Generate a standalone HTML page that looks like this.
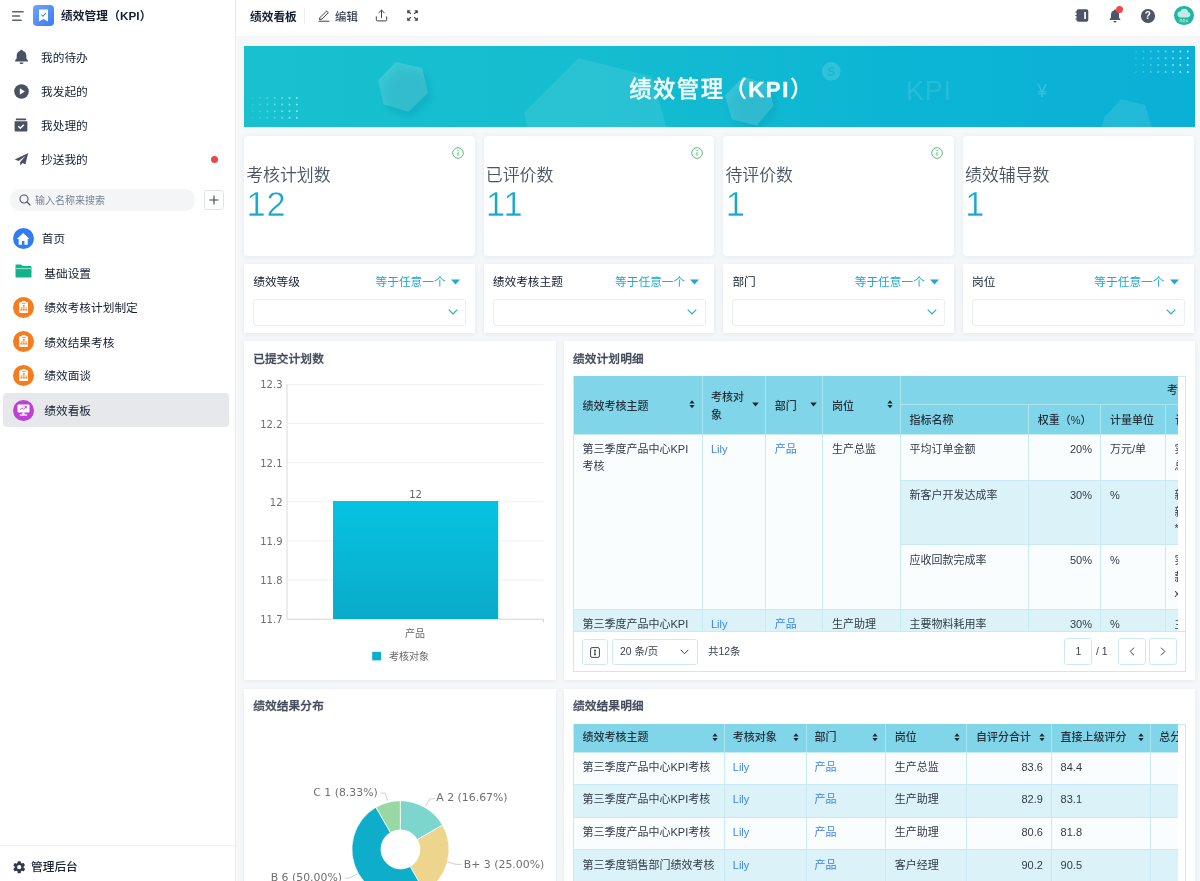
<!DOCTYPE html>
<html lang="zh-CN">
<head>
<meta charset="utf-8">
<title>绩效管理（KPI）</title>
<style>
*{box-sizing:border-box;margin:0;padding:0}
html,body{width:1200px;height:881px;overflow:hidden;background:#f5f7f9}
body{position:relative;will-change:transform;font-family:"Liberation Sans","Noto Sans CJK SC",sans-serif;font-size:12px;color:#141e31;-webkit-font-smoothing:antialiased}
.abs{position:absolute}
/* sidebar */
#side{position:absolute;left:0;top:0;width:236px;height:881px;background:#fff;border-right:1px solid #e9ecf0}
#side .hd{position:absolute;left:0;top:0;width:235px;height:32px}
#side .ttl{position:absolute;left:61px;top:6.900px;font-size:11.700px;font-weight:700;line-height:18px;letter-spacing:.1px;color:#141e31}
.nav{position:absolute;left:0;width:235px;height:34px}
.nav span{position:absolute;left:41px;top:9px;font-size:11.700px;line-height:18px;color:#141e31}
.app{position:absolute;left:3px;width:226px;height:34px;border-radius:4px}
.app span{position:absolute;left:41.300px;top:9px;font-size:11.700px;line-height:18px;color:#141e31}
.app.on{background:#e6e8ec}
.circ{position:absolute;left:10px;top:6.5px;width:21px;height:21px;border-radius:50%}
/* top bar */
#top{position:absolute;left:236px;top:0;width:964px;height:36px;background:#fff;box-shadow:0 0 1px rgba(0,0,0,.05)}
/* cards */
.card{position:absolute;background:#fff;box-shadow:0 1px 4px rgba(200,208,220,.35)}
.stat{border-radius:4px}
.stat .lb{position:absolute;left:2px;top:27.800px;font-size:16.900px;line-height:24px;color:#4b5262;font-weight:350}
.stat .nm{position:absolute;left:2.300px;top:48.300px;font-size:34.400px;line-height:40px;color:#17a7cc;font-family:"Liberation Sans",sans-serif;letter-spacing:.8px;-webkit-text-stroke:.45px #fff;paint-order:fill stroke}
.flt .lb{position:absolute;left:9px;top:9.300px;font-size:11.700px;line-height:18px;color:#141e31}
.flt .op{position:absolute;right:15px;top:9.300px;font-size:11.700px;line-height:18px;color:#1ea9d0}
.flt .sel{position:absolute;left:8.800px;top:34.500px;right:8.700px;height:27.200px;border:1px solid #eaedf1;border-radius:3px;background:#fff}
.ctitle{position:absolute;left:9px;top:8.900px;font-size:11.700px;line-height:18px;font-weight:500;-webkit-text-stroke:.3px #434a5b;letter-spacing:.1px;color:#434a5b}
</style>
</head>
<body>
<div id="side">
  <div class="hd">
    <svg class="abs" style="left:11px;top:9px" width="14" height="14" viewBox="0 0 14 14"><path d="M1.700 2.700h10.400M1.700 7h6.800M1.700 11.300h8.400" stroke="#5a6172" stroke-width="1.500" stroke-linecap="round" fill="none"/></svg>
    <div class="abs" style="left:33px;top:5px;width:21px;height:21px;border-radius:4px;background:linear-gradient(135deg,#6aa6f8,#3c7bf0)"></div>
    <svg class="abs" style="left:38px;top:9px" width="11" height="13" viewBox="0 0 11 13"><path d="M1 .5h9v12l-4.500-2.600L1 12.500z" fill="#fff"/><path d="M3.400 5.600l1.600 1.600 2.800-3" stroke="#4d8af3" stroke-width="1.100" fill="none"/></svg>
    <div class="ttl">绩效管理（KPI）</div>
  </div>

  <!-- nav -->
  <div class="nav" style="top:40px">
    <svg class="abs" style="left:13.800px;top:9px" width="15" height="16" viewBox="0 0 14 16" preserveAspectRatio="none"><path d="M7 .8c.7 0 1.200.5 1.200 1.100 2 .5 3.300 2.300 3.300 4.500v3.200l1.500 2v.8H1v-.8l1.500-2V6.400c0-2.200 1.300-4 3.300-4.500C5.800 1.300 6.300.8 7 .8z" fill="#4a5163"/><path d="M5.200 13.400h3.600c0 1-.8 1.700-1.800 1.700s-1.800-.7-1.800-1.700z" fill="#4a5163"/></svg>
    <span>我的待办</span></div>
  <div class="nav" style="top:74px">
    <svg class="abs" style="left:14px;top:10px" width="15" height="15" viewBox="0 0 15 15"><circle cx="7.500" cy="7.500" r="7.300" fill="#4a5163"/><path d="M5.800 4.200l5 3.300-5 3.300z" fill="#fff"/></svg>
    <span>我发起的</span></div>
  <div class="nav" style="top:108px">
    <svg class="abs" style="left:14px;top:10px" width="14" height="14" viewBox="0 0 14 14"><rect x="1.800" y=".6" width="10.400" height="1.700" rx=".6" fill="#4a5163"/><path d="M.6 3.200h12.800v9.200c0 .6-.5 1.100-1.100 1.100H1.700c-.6 0-1.100-.5-1.100-1.100z" fill="#4a5163"/><path d="M4.300 8.300l2 2 3.500-3.600" stroke="#fff" stroke-width="1.500" fill="none"/></svg>
    <span>我处理的</span></div>
  <div class="nav" style="top:142px">
    <svg class="abs" style="left:14px;top:10px" width="15" height="15" viewBox="0 0 15 15"><path d="M14.200 1L.8 7.600l3.800 1.500L11.400 4 6.200 10v3.800l2.300-2.700 2.900 1.300z" fill="#4a5163"/></svg>
    <span>抄送我的</span>
    <div class="abs" style="left:211px;top:14px;width:7px;height:7px;border-radius:50%;background:#e8484b"></div></div>
  <!-- search -->
  <div class="abs" style="left:10px;top:189px;width:185px;height:22px;border-radius:11px;background:#f3f5f7"></div>
  <svg class="abs" style="left:19px;top:194px" width="12" height="12" viewBox="0 0 12 12"><circle cx="5" cy="5" r="4" stroke="#4a5163" stroke-width="1.100" fill="none"/><path d="M8 8l3 3" stroke="#4a5163" stroke-width="1.100" stroke-linecap="round"/></svg>
  <div class="abs" style="left:35px;top:192px;font-size:10px;line-height:18px;color:#7a8191">输入名称来搜索</div>
  <div class="abs" style="left:204px;top:190px;width:20px;height:20px;border:1px solid #dfe2e7;border-radius:3px;background:#fff"></div>
  <svg class="abs" style="left:209px;top:195px" width="10" height="10" viewBox="0 0 10 10"><path d="M5 .5v9M.5 5h9" stroke="#3a4152" stroke-width="1.100"/></svg>
  <!-- apps -->
  <div class="app" style="top:221.900px">
    <div class="circ" style="background:#2f7df6;left:10px"></div>
    <svg class="abs" style="left:12.900px;top:9.800px" width="14.400" height="14.400" viewBox="0 0 13 13"><path d="M6.500 1L.8 6.300h1.600v5.200h3V8.200h2.200v3.300h3V6.300h1.600z" fill="#fff"/></svg>
    <span style="left:38.800px;top:7.900px">首页</span></div>
  <div class="app" style="top:256px">
    <svg class="abs" style="left:12px;top:7.500px" width="17" height="14" viewBox="0 0 17 14"><path d="M.5 1.500C.5.900.9.500 1.500.500h4.600l1.500 1.400h7.900c.6 0 1 .4 1 1v9.600c0 .6-.4 1-1 1h-14c-.6 0-1-.4-1-1z" fill="#12b38b"/><rect x=".5" y="3.900" width="16" height="1.200" fill="#8fdcc6"/></svg>
    <span>基础设置</span></div>
  <div class="app" style="top:290px">
    <div class="circ" style="background:#f57c1f"></div>
    <svg class="abs" style="left:15.700px;top:10.800px" width="9.600" height="12.200" viewBox="0 0 10 12.500"><rect x=".2" y="1.300" width="9.600" height="11" rx="1" fill="#fff"/><rect x="3" y="0" width="4" height="2.300" rx=".7" fill="#fff"/><rect x="3.100" y="1.900" width="3.800" height=".75" fill="#f57c1f"/><g fill="#f78f3f"><rect x="4" y="4" width="2" height="1.800"/><rect x="1.500" y="8" width="2" height="1.900"/><rect x="4" y="8" width="2" height="1.900"/><rect x="6.500" y="8" width="2" height="1.900"/><rect x="4.700" y="5.800" width=".6" height="1.200"/><rect x="2.200" y="6.800" width="5.600" height=".6"/><rect x="2.200" y="6.800" width=".6" height="1.200"/><rect x="4.700" y="6.800" width=".6" height="1.200"/><rect x="7.200" y="6.800" width=".6" height="1.200"/></g></svg>
    <span>绩效考核计划制定</span></div>
  <div class="app" style="top:324.500px">
    <div class="circ" style="background:#f57c1f"></div>
    <svg class="abs" style="left:15.700px;top:10.800px" width="9.600" height="12.200" viewBox="0 0 10 12.500"><rect x=".2" y="1.300" width="9.600" height="11" rx="1" fill="#fff"/><rect x="3" y="0" width="4" height="2.300" rx=".7" fill="#fff"/><rect x="3.100" y="1.900" width="3.800" height=".75" fill="#f57c1f"/><g fill="#f78f3f"><rect x="4" y="4" width="2" height="1.800"/><rect x="1.500" y="8" width="2" height="1.900"/><rect x="4" y="8" width="2" height="1.900"/><rect x="6.500" y="8" width="2" height="1.900"/><rect x="4.700" y="5.800" width=".6" height="1.200"/><rect x="2.200" y="6.800" width="5.600" height=".6"/><rect x="2.200" y="6.800" width=".6" height="1.200"/><rect x="4.700" y="6.800" width=".6" height="1.200"/><rect x="7.200" y="6.800" width=".6" height="1.200"/></g></svg>
    <span>绩效结果考核</span></div>
  <div class="app" style="top:358.300px">
    <div class="circ" style="background:#f57c1f"></div>
    <svg class="abs" style="left:15.700px;top:10.800px" width="9.600" height="12.200" viewBox="0 0 10 12.500"><rect x=".2" y="1.300" width="9.600" height="11" rx="1" fill="#fff"/><rect x="3" y="0" width="4" height="2.300" rx=".7" fill="#fff"/><rect x="3.100" y="1.900" width="3.800" height=".75" fill="#f57c1f"/><g fill="#f78f3f"><rect x="4" y="4" width="2" height="1.800"/><rect x="1.500" y="8" width="2" height="1.900"/><rect x="4" y="8" width="2" height="1.900"/><rect x="6.500" y="8" width="2" height="1.900"/><rect x="4.700" y="5.800" width=".6" height="1.200"/><rect x="2.200" y="6.800" width="5.600" height=".6"/><rect x="2.200" y="6.800" width=".6" height="1.200"/><rect x="4.700" y="6.800" width=".6" height="1.200"/><rect x="7.200" y="6.800" width=".6" height="1.200"/></g></svg>
    <span>绩效面谈</span></div>
  <div class="app on" style="top:393px">
    <div class="circ" style="background:#c13fd6"></div>
    <svg class="abs" style="left:14px;top:11px" width="13" height="12" viewBox="0 0 13 12"><rect x=".5" y=".5" width="12" height="8" rx="1" fill="#fff"/><path d="M2.800 11h7.400" stroke="#fff" stroke-width="1.300"/><path d="M6.500 8.500v2.300" stroke="#fff" stroke-width="2.200"/><path d="M2.800 6l2.200-2.200 1.600 1.400 2.600-2.400M7.600 2.600h1.800v1.800" stroke="#c13fd6" stroke-width=".9" fill="none"/></svg>
    <span>绩效看板</span></div>
  <!-- footer -->
  <div class="abs" style="left:0;top:844.500px;width:235px;height:1px;background:#f0f2f4"></div>
  <svg class="abs" style="left:12.100px;top:859.500px" width="14.400" height="14.400" viewBox="0 0 24 24"><path fill="#30384a" d="M19.400 13c.04-.3.060-.66.060-1s-.02-.7-.07-1l2.100-1.650c.2-.15.250-.42.130-.64l-2-3.460c-.12-.22-.38-.3-.6-.22l-2.500 1c-.52-.4-1.080-.73-1.700-.98l-.37-2.650A.49.490 0 0 0 14 2h-4c-.25 0-.46.180-.5.420l-.37 2.650c-.62.250-1.180.6-1.700.98l-2.500-1a.5.500 0 0 0-.6.220l-2 3.460c-.13.220-.07.500.12.640L4.560 11c-.04.300-.06.660-.06 1s.02.700.07 1l-2.100 1.650c-.2.150-.25.420-.13.640l2 3.460c.12.220.38.300.6.220l2.500-1c.52.400 1.080.73 1.700.98l.37 2.650c.04.240.25.420.5.420h4c.25 0 .46-.18.500-.42l.37-2.650c.62-.25 1.180-.6 1.700-.98l2.500 1c.22.080.48 0 .6-.22l2-3.460c.12-.22.070-.5-.12-.64L19.400 13zM12 15.600A3.600 3.600 0 1 1 12 8.400a3.600 3.600 0 0 1 0 7.200z"/></svg>
  <div class="abs" style="left:31px;top:858.200px;font-size:11.700px;line-height:18px;font-weight:500;color:#1c2536">管理后台</div>
</div>
<div id="top">
  <div class="abs" style="left:14px;top:7.500px;font-size:11.700px;line-height:18px;font-weight:700;color:#141e31">绩效看板</div>
  <div class="abs" style="left:67.500px;top:8px;width:1px;height:16px;background:#eceef2"></div>
  <svg class="abs" style="left:82px;top:9px" width="12" height="13" viewBox="0 0 12 13"><path d="M2.200 8.400L8.600 2l1.700 1.700-6.400 6.400-2.100.4zM1 12.200h10" stroke="#3a4152" stroke-width="1" fill="none" stroke-linejoin="round" stroke-linecap="round"/></svg>
  <div class="abs" style="left:99px;top:7.800px;font-size:11.400px;line-height:18px;font-weight:500;color:#3a4152">编辑</div>
  <svg class="abs" style="left:139px;top:9px" width="13" height="13" viewBox="0 0 13 13"><path d="M6.500 8.500V1.300M3.800 3.800l2.700-2.700 2.700 2.700M1.300 7.800v3.100c0 .6.400 1 1 1h8.400c.6 0 1-.4 1-1V7.800" stroke="#3a4152" stroke-width="1" fill="none" stroke-linecap="round" stroke-linejoin="round"/></svg>
  <svg class="abs" style="left:171px;top:10px" width="11" height="11" viewBox="0 0 12 12"><path d="M.8 3.600V.8h2.800M.8.800l3.400 3.400M8.400.8h2.800v2.800M11.200.8L7.800 4.200M.8 8.400v2.800h2.800M.8 11.200l3.400-3.400M11.200 8.400v2.800H8.400M11.200 11.200L7.800 7.800" stroke="#3a4152" stroke-width="1.250" fill="none"/></svg>
  <!-- right icons -->
  <svg class="abs" style="left:839.400px;top:9.200px" width="13.500" height="13" viewBox="0 0 13.500 13"><rect x="1.500" y=".2" width="11.800" height="12.600" rx="1.800" fill="#4e5566"/><rect x="9.200" y="3" width="1.700" height="7" fill="#fff"/><path d="M.4 3h2M.4 6.500h2M.4 10h2" stroke="#4e5566" stroke-width="1.200"/></svg>
  <svg class="abs" style="left:873px;top:9px" width="12" height="14" viewBox="0 0 12 14"><path d="M6 .6c.6 0 1 .4 1 1 1.800.4 3 2 3 4v3l1.400 1.800v.7H.6v-.7L2 8.600v-3c0-2 1.200-3.600 3-4 0-.6.400-1 1-1z" fill="#4e5566"/><path d="M4.400 11.900h3.200c0 .9-.7 1.500-1.600 1.500s-1.600-.6-1.600-1.500z" fill="#4e5566"/></svg>
  <div class="abs" style="left:879.800px;top:5.900px;width:7.400px;height:7.400px;border-radius:50%;background:#ee4a4d"></div>
  <div class="abs" style="left:905px;top:9.200px;width:13.500px;height:13.500px;border-radius:50%;background:#4e5566;color:#fff;font-size:10px;font-weight:700;line-height:13.500px;text-align:center;font-family:'Liberation Sans',sans-serif">?</div>
  <div class="abs" style="left:938.200px;top:6.100px;width:19.400px;height:19.400px;border-radius:50%;background:#1fb7a0"></div>
  <svg class="abs" style="left:938.200px;top:6.100px" width="19.400" height="19.400" viewBox="0 0 19.400 19.400"><g fill="#fff" opacity=".72"><circle cx="6.500" cy="8.300" r="3"/><circle cx="10.300" cy="6.400" r="3.700"/><circle cx="13.600" cy="8.600" r="2.700"/><rect x="5" y="8" width="10" height="3.400" rx="1.700"/></g><text x="9.700" y="15.900" font-size="3.200" fill="#fff" opacity=".85" text-anchor="middle" font-family="Liberation Sans, Noto Sans CJK SC, sans-serif">简道云</text></svg>
</div>
<div id="main">
<div class="abs" style="left:244px;top:45.500px;width:951px;height:81.500px;background:linear-gradient(90deg,#18c1ce 0%,#14bcd0 40%,#0cb5d4 68%,#0ab0d6 100%);overflow:hidden">
<svg class="abs" style="left:0;top:0" width="951" height="82" viewBox="244 45.500 951 82"><defs><filter id="hs" x="-40%" y="-40%" width="200%" height="200%"><feGaussianBlur stdDeviation="3.500"/></filter></defs>
<polygon points="396,61.300 422.300,67.500 428,92.500 408.500,111.300 383.500,103.800 378,80" fill="#0590aa" opacity=".28" filter="url(#hs)" transform="translate(4,6)"/><polygon points="396,61.300 422.300,67.500 428,92.500 408.500,111.300 383.500,103.800 378,80" fill="#fff" opacity=".15"/>
<polygon points="524,112 578.500,57.500 652,76 668,132 530,140" fill="#fff" opacity=".09"/>
<polygon points="724.750,95 743.500,76 768.500,84 773.500,105 757,125 732,119" fill="#0590aa" opacity=".25" filter="url(#hs)" transform="translate(4,6)"/><polygon points="724.750,95 743.500,76 768.500,84 773.500,105 757,125 732,119" fill="#fff" opacity=".15"/>
<polygon points="1104.400,116.800 1121,98.600 1145.400,104.600 1153,132 1100,132" fill="#fff" opacity=".1"/>
<circle cx="831.200" cy="70.800" r="9.300" fill="#fff" opacity=".15"/><text x="831.200" y="75" font-family="Liberation Sans, sans-serif" font-size="12" font-weight="700" fill="#10b6d2" text-anchor="middle" opacity=".8">S</text>
<circle cx="252.5" cy="97.5" r="1" fill="#fff" opacity="0.12"/><circle cx="259.9" cy="97.5" r="1" fill="#fff" opacity="0.20"/><circle cx="267.3" cy="97.5" r="1" fill="#fff" opacity="0.27"/><circle cx="274.7" cy="97.5" r="1" fill="#fff" opacity="0.34"/><circle cx="282.1" cy="97.5" r="1" fill="#fff" opacity="0.42"/><circle cx="289.5" cy="97.5" r="1" fill="#fff" opacity="0.49"/><circle cx="296.9" cy="97.5" r="1" fill="#fff" opacity="0.57"/><circle cx="252.5" cy="104.1" r="1" fill="#fff" opacity="0.12"/><circle cx="259.9" cy="104.1" r="1" fill="#fff" opacity="0.20"/><circle cx="267.3" cy="104.1" r="1" fill="#fff" opacity="0.27"/><circle cx="274.7" cy="104.1" r="1" fill="#fff" opacity="0.34"/><circle cx="282.1" cy="104.1" r="1" fill="#fff" opacity="0.42"/><circle cx="289.5" cy="104.1" r="1" fill="#fff" opacity="0.49"/><circle cx="296.9" cy="104.1" r="1" fill="#fff" opacity="0.57"/><circle cx="252.5" cy="110.7" r="1" fill="#fff" opacity="0.12"/><circle cx="259.9" cy="110.7" r="1" fill="#fff" opacity="0.20"/><circle cx="267.3" cy="110.7" r="1" fill="#fff" opacity="0.27"/><circle cx="274.7" cy="110.7" r="1" fill="#fff" opacity="0.34"/><circle cx="282.1" cy="110.7" r="1" fill="#fff" opacity="0.42"/><circle cx="289.5" cy="110.7" r="1" fill="#fff" opacity="0.49"/><circle cx="296.9" cy="110.7" r="1" fill="#fff" opacity="0.57"/><circle cx="252.5" cy="117.3" r="1" fill="#fff" opacity="0.12"/><circle cx="259.9" cy="117.3" r="1" fill="#fff" opacity="0.20"/><circle cx="267.3" cy="117.3" r="1" fill="#fff" opacity="0.27"/><circle cx="274.7" cy="117.3" r="1" fill="#fff" opacity="0.34"/><circle cx="282.1" cy="117.3" r="1" fill="#fff" opacity="0.42"/><circle cx="289.5" cy="117.3" r="1" fill="#fff" opacity="0.49"/><circle cx="296.9" cy="117.3" r="1" fill="#fff" opacity="0.57"/><circle cx="1136.0" cy="51.0" r="1" fill="#fff" opacity="0.15"/><circle cx="1143.4" cy="51.0" r="1" fill="#fff" opacity="0.23"/><circle cx="1150.8" cy="51.0" r="1" fill="#fff" opacity="0.31"/><circle cx="1158.2" cy="51.0" r="1" fill="#fff" opacity="0.39"/><circle cx="1165.6" cy="51.0" r="1" fill="#fff" opacity="0.46"/><circle cx="1173.0" cy="51.0" r="1" fill="#fff" opacity="0.54"/><circle cx="1180.4" cy="51.0" r="1" fill="#fff" opacity="0.62"/><circle cx="1187.8" cy="51.0" r="1" fill="#fff" opacity="0.70"/><circle cx="1136.0" cy="57.8" r="1" fill="#fff" opacity="0.15"/><circle cx="1143.4" cy="57.8" r="1" fill="#fff" opacity="0.23"/><circle cx="1150.8" cy="57.8" r="1" fill="#fff" opacity="0.31"/><circle cx="1158.2" cy="57.8" r="1" fill="#fff" opacity="0.39"/><circle cx="1165.6" cy="57.8" r="1" fill="#fff" opacity="0.46"/><circle cx="1173.0" cy="57.8" r="1" fill="#fff" opacity="0.54"/><circle cx="1180.4" cy="57.8" r="1" fill="#fff" opacity="0.62"/><circle cx="1187.8" cy="57.8" r="1" fill="#fff" opacity="0.70"/><circle cx="1136.0" cy="64.6" r="1" fill="#fff" opacity="0.15"/><circle cx="1143.4" cy="64.6" r="1" fill="#fff" opacity="0.23"/><circle cx="1150.8" cy="64.6" r="1" fill="#fff" opacity="0.31"/><circle cx="1158.2" cy="64.6" r="1" fill="#fff" opacity="0.39"/><circle cx="1165.6" cy="64.6" r="1" fill="#fff" opacity="0.46"/><circle cx="1173.0" cy="64.6" r="1" fill="#fff" opacity="0.54"/><circle cx="1180.4" cy="64.6" r="1" fill="#fff" opacity="0.62"/><circle cx="1187.8" cy="64.6" r="1" fill="#fff" opacity="0.70"/><circle cx="1136.0" cy="71.4" r="1" fill="#fff" opacity="0.15"/><circle cx="1143.4" cy="71.4" r="1" fill="#fff" opacity="0.23"/><circle cx="1150.8" cy="71.4" r="1" fill="#fff" opacity="0.31"/><circle cx="1158.2" cy="71.4" r="1" fill="#fff" opacity="0.39"/><circle cx="1165.6" cy="71.4" r="1" fill="#fff" opacity="0.46"/><circle cx="1173.0" cy="71.4" r="1" fill="#fff" opacity="0.54"/><circle cx="1180.4" cy="71.4" r="1" fill="#fff" opacity="0.62"/><circle cx="1187.8" cy="71.4" r="1" fill="#fff" opacity="0.70"/>
<text x="906" y="99.500" font-family="Liberation Sans, sans-serif" font-size="27" fill="#fff" opacity=".1" letter-spacing=".8">KPI</text>
<text x="1037.300" y="96" font-family="Liberation Sans, sans-serif" font-size="17.500" fill="#fff" opacity=".17">¥</text>
</svg>
<div class="abs" style="left:0;top:0;width:951px;height:81.500px;line-height:87px;text-align:center;font-size:22.300px;font-weight:500;-webkit-text-stroke:.35px #f2fcfd;color:#f2fcfd;letter-spacing:1.500px;white-space:nowrap"><span id="btitle" style="position:relative;left:2px">绩效管理（<b style="font-weight:700">KPI</b>）</span></div>
</div>
<div class="card stat" style="left:244.200px;top:136px;width:230.700px;height:119.500px"><div class="lb">考核计划数</div><div class="nm">12</div><svg class="abs" style="left:207.500px;top:10.500px" width="12" height="12" viewBox="0 0 12 12"><circle cx="6" cy="6" r="5.300" stroke="#57c07a" stroke-width="1" fill="none"/><path d="M6 5.300v3.400" stroke="#57c07a" stroke-width="1.100"/><circle cx="6" cy="3.500" r=".7" fill="#57c07a"/></svg></div>
<div class="card stat" style="left:483.800px;top:136px;width:230.700px;height:119.500px"><div class="lb">已评价数</div><div class="nm">11</div><svg class="abs" style="left:207.500px;top:10.500px" width="12" height="12" viewBox="0 0 12 12"><circle cx="6" cy="6" r="5.300" stroke="#57c07a" stroke-width="1" fill="none"/><path d="M6 5.300v3.400" stroke="#57c07a" stroke-width="1.100"/><circle cx="6" cy="3.500" r=".7" fill="#57c07a"/></svg></div>
<div class="card stat" style="left:723.400px;top:136px;width:230.700px;height:119.500px"><div class="lb">待评价数</div><div class="nm">1</div><svg class="abs" style="left:207.500px;top:10.500px" width="12" height="12" viewBox="0 0 12 12"><circle cx="6" cy="6" r="5.300" stroke="#57c07a" stroke-width="1" fill="none"/><path d="M6 5.300v3.400" stroke="#57c07a" stroke-width="1.100"/><circle cx="6" cy="3.500" r=".7" fill="#57c07a"/></svg></div>
<div class="card stat" style="left:963px;top:136px;width:230.700px;height:119.500px"><div class="lb">绩效辅导数</div><div class="nm">1</div></div>
<div class="card flt" style="left:244.200px;top:264px;width:230.700px;height:69px"><div class="lb">绩效等级</div><div class="op">等于任意一个 <svg width="9" height="6" viewBox="0 0 9 6" style="margin-left:2px;position:relative;top:-1px"><path d="M0 .5h9L4.500 5.500z" fill="#1ea9d0"/></svg></div><div class="sel"><svg class="abs" style="right:7.600px;top:9.300px" width="10" height="6" viewBox="0 0 10 6"><path d="M.7.700L5 5l4.300-4.300" stroke="#1ea9d0" stroke-width="1.100" fill="none"/></svg></div></div>
<div class="card flt" style="left:483.800px;top:264px;width:230.700px;height:69px"><div class="lb">绩效考核主题</div><div class="op">等于任意一个 <svg width="9" height="6" viewBox="0 0 9 6" style="margin-left:2px;position:relative;top:-1px"><path d="M0 .5h9L4.500 5.500z" fill="#1ea9d0"/></svg></div><div class="sel"><svg class="abs" style="right:7.600px;top:9.300px" width="10" height="6" viewBox="0 0 10 6"><path d="M.7.700L5 5l4.300-4.300" stroke="#1ea9d0" stroke-width="1.100" fill="none"/></svg></div></div>
<div class="card flt" style="left:723.400px;top:264px;width:230.700px;height:69px"><div class="lb">部门</div><div class="op">等于任意一个 <svg width="9" height="6" viewBox="0 0 9 6" style="margin-left:2px;position:relative;top:-1px"><path d="M0 .5h9L4.500 5.500z" fill="#1ea9d0"/></svg></div><div class="sel"><svg class="abs" style="right:7.600px;top:9.300px" width="10" height="6" viewBox="0 0 10 6"><path d="M.7.700L5 5l4.300-4.300" stroke="#1ea9d0" stroke-width="1.100" fill="none"/></svg></div></div>
<div class="card flt" style="left:963px;top:264px;width:230.700px;height:69px"><div class="lb">岗位</div><div class="op">等于任意一个 <svg width="9" height="6" viewBox="0 0 9 6" style="margin-left:2px;position:relative;top:-1px"><path d="M0 .5h9L4.500 5.500z" fill="#1ea9d0"/></svg></div><div class="sel"><svg class="abs" style="right:7.600px;top:9.300px" width="10" height="6" viewBox="0 0 10 6"><path d="M.7.700L5 5l4.300-4.300" stroke="#1ea9d0" stroke-width="1.100" fill="none"/></svg></div></div>
<div class="card" style="left:244.200px;top:341px;width:311.400px;height:339px"><div class="ctitle">已提交计划数</div>
<svg class="abs" style="left:0;top:0" width="311.500" height="339" viewBox="244 341 311.500 339" font-family="DejaVu Sans, sans-serif">
<defs><linearGradient id="bg1" x1="0" y1="0" x2="0" y2="1"><stop offset="0" stop-color="#07c2e1"/><stop offset="1" stop-color="#0aabc9"/></linearGradient></defs>
<path d="M287 384.4H543.500" stroke="#f0f0f0" stroke-width="1"/><text x="282.500" y="388.4" font-size="10" fill="#6e6e6e" text-anchor="end">12.3</text>
<path d="M287 423.5H543.500" stroke="#f0f0f0" stroke-width="1"/><text x="282.500" y="427.5" font-size="10" fill="#6e6e6e" text-anchor="end">12.2</text>
<path d="M287 462.7H543.500" stroke="#f0f0f0" stroke-width="1"/><text x="282.500" y="466.7" font-size="10" fill="#6e6e6e" text-anchor="end">12.1</text>
<path d="M287 501.8H543.500" stroke="#f0f0f0" stroke-width="1"/><text x="282.500" y="505.8" font-size="10" fill="#6e6e6e" text-anchor="end">12</text>
<path d="M287 541.0H543.500" stroke="#f0f0f0" stroke-width="1"/><text x="282.500" y="545.0" font-size="10" fill="#6e6e6e" text-anchor="end">11.9</text>
<path d="M287 580.1H543.500" stroke="#f0f0f0" stroke-width="1"/><text x="282.500" y="584.1" font-size="10" fill="#6e6e6e" text-anchor="end">11.8</text>
<text x="282.500" y="623.2" font-size="10" fill="#6e6e6e" text-anchor="end">11.7</text>
<path d="M287 384V619.500" stroke="#d9d9d9" stroke-width="1"/><path d="M287 619.200H543.500V622" stroke="#d4d4d4" stroke-width="1" fill="none"/><rect x="333" y="501" width="165.200" height="118" fill="url(#bg1)"/><text x="415.500" y="497.600" font-size="10" fill="#666" text-anchor="middle">12</text><text x="415" y="636.800" font-size="10" fill="#666" text-anchor="middle" font-family="Liberation Sans, Noto Sans CJK SC, sans-serif">产品</text><rect x="372.200" y="651.800" width="8.800" height="8.600" fill="#0eaecb"/><text x="389" y="659.800" font-size="10" fill="#666" font-family="Liberation Sans, Noto Sans CJK SC, sans-serif">考核对象</text></svg></div>
<div class="card" style="left:244.200px;top:688.500px;width:311.400px;height:260px"><div class="ctitle">绩效结果分布</div>
<svg class="abs" style="left:0;top:0" width="311.500" height="260" viewBox="244 688.500 311.500 260" font-family="DejaVu Sans, sans-serif" font-size="10.900" fill="#707070">
<path d="M400.30 800.20A48.8 48.8 0 0 1 442.56 824.60L417.27 839.20A19.6 19.6 0 0 0 400.30 829.40Z" fill="#7dd6cd" stroke="#fff" stroke-width=".8"/><path d="M442.56 824.60A48.8 48.8 0 0 1 424.70 891.26L410.10 865.97A19.6 19.6 0 0 0 417.27 839.20Z" fill="#edd58d" stroke="#fff" stroke-width=".8"/><path d="M424.70 891.26A48.8 48.8 0 0 1 375.90 806.74L390.50 832.03A19.6 19.6 0 0 0 410.10 865.97Z" fill="#0eaeca" stroke="#fff" stroke-width=".8"/><path d="M375.90 806.74A48.8 48.8 0 0 1 400.30 800.20L400.30 829.40A19.6 19.6 0 0 0 390.50 832.03Z" fill="#98d9a3" stroke="#fff" stroke-width=".8"/><path d="M425.800 805.100L429.900 798.300H435" stroke="#c2c6c6" stroke-width=".8" fill="none"/><path d="M387.400 800.200L385.300 792.600H380.500" stroke="#c2c6c6" stroke-width=".8" fill="none"/><path d="M447.800 861.500L456 863.900H461.500" stroke="#c2c6c6" stroke-width=".8" fill="none"/><path d="M357.500 873.200L350 877.500H344.600" stroke="#c2c6c6" stroke-width=".8" fill="none"/><text x="436.300" y="800.900">A 2 (16.67%)</text><text x="377.800" y="795.400" text-anchor="end">C 1 (8.33%)</text><text x="463.800" y="867.500">B+ 3 (25.00%)</text><text x="342" y="880.800" text-anchor="end">B 6 (50.00%)</text></svg></div>
<!--TB--><div class="card" style="left:564px;top:341px;width:631px;height:339px"><div class="ctitle">绩效计划明细</div>
<div class="abs" style="left:-564px;top:-341px;width:1200px;height:881px;pointer-events:none">
<div class="abs" style="left:573px;top:375.600px;width:613.200px;height:296px;border:1px solid #c8ebf3;background:#fff"></div>
<div class="abs" style="left:574px;top:375.600px;width:604px;height:256px;overflow:hidden"><div class="abs" style="left:-574px;top:-375.600px;width:1300px;height:881px">
<div class="abs" style="left:573.0px;top:375.0px;width:727.0px;height:59.0px;background:#80d6e8"></div><div class="abs" style="left:573.0px;top:434.0px;width:327.5px;height:175.0px;background:#fafdfe"></div><div class="abs" style="left:900.5px;top:434.0px;width:399.5px;height:46.9px;background:#fafdfe"></div><div class="abs" style="left:900.5px;top:480.9px;width:399.5px;height:63.8px;background:#daf2f8"></div><div class="abs" style="left:900.5px;top:544.7px;width:399.5px;height:64.3px;background:#fafdfe"></div><div class="abs" style="left:573.0px;top:609.0px;width:727.0px;height:91.0px;background:#daf2f8"></div><div class="abs" style="left:701.5px;top:375.0px;width:1.0px;height:59.0px;background:#a9e4ef"></div><div class="abs" style="left:701.5px;top:434.0px;width:1.0px;height:206.0px;background:#c8ebf3"></div><div class="abs" style="left:765.0px;top:375.0px;width:1.0px;height:59.0px;background:#a9e4ef"></div><div class="abs" style="left:765.0px;top:434.0px;width:1.0px;height:206.0px;background:#c8ebf3"></div><div class="abs" style="left:822.0px;top:375.0px;width:1.0px;height:59.0px;background:#a9e4ef"></div><div class="abs" style="left:822.0px;top:434.0px;width:1.0px;height:206.0px;background:#c8ebf3"></div><div class="abs" style="left:900.0px;top:375.0px;width:1.0px;height:59.0px;background:#a9e4ef"></div><div class="abs" style="left:900.0px;top:434.0px;width:1.0px;height:206.0px;background:#c8ebf3"></div><div class="abs" style="left:1028.0px;top:404.5px;width:1.0px;height:29.5px;background:#a9e4ef"></div><div class="abs" style="left:1028.0px;top:434.0px;width:1.0px;height:206.0px;background:#c8ebf3"></div><div class="abs" style="left:1100.0px;top:404.5px;width:1.0px;height:29.5px;background:#a9e4ef"></div><div class="abs" style="left:1100.0px;top:434.0px;width:1.0px;height:206.0px;background:#c8ebf3"></div><div class="abs" style="left:1165.1px;top:404.5px;width:1.0px;height:29.5px;background:#a9e4ef"></div><div class="abs" style="left:1165.1px;top:434.0px;width:1.0px;height:206.0px;background:#c8ebf3"></div><div class="abs" style="left:900.5px;top:404.0px;width:399.5px;height:1.0px;background:#a9e4ef"></div><div class="abs" style="left:573.0px;top:433.5px;width:727.0px;height:1.0px;background:#c8ebf3"></div><div class="abs" style="left:900.5px;top:480.4px;width:399.5px;height:1.0px;background:#c8ebf3"></div><div class="abs" style="left:900.5px;top:544.2px;width:399.5px;height:1.0px;background:#c8ebf3"></div><div class="abs" style="left:573.0px;top:608.5px;width:727.0px;height:1.0px;background:#c8ebf3"></div><div class="abs" style="left:582.5px;top:397.6px;font-size:11px;line-height:16.5px;color:#26303d;font-weight:500;white-space:nowrap;">绩效考核主题</div><svg class="abs" style="left:689.0px;top:400.4px" width="6" height="8.500" viewBox="0 0 7 10"><path d="M3.500 .3L6.600 4.200H.4zM3.500 9.700L.4 5.800h6.200z" fill="#1f2633"/></svg><div class="abs" style="left:711.0px;top:388.3px;font-size:11px;line-height:18px;color:#26303d;font-weight:500;white-space:nowrap;">考核对<br>象</div><svg class="abs" style="left:752.0px;top:402.2px" width="7" height="5" viewBox="0 0 7 5"><path d="M.2 .5h6.600L3.500 4.500z" fill="#1f2633"/></svg><div class="abs" style="left:774.7px;top:397.6px;font-size:11px;line-height:16.5px;color:#26303d;font-weight:500;white-space:nowrap;">部门</div><svg class="abs" style="left:809.5px;top:402.2px" width="7" height="5" viewBox="0 0 7 5"><path d="M.2 .5h6.600L3.500 4.500z" fill="#1f2633"/></svg><div class="abs" style="left:832.0px;top:397.6px;font-size:11px;line-height:16.5px;color:#26303d;font-weight:500;white-space:nowrap;">岗位</div><svg class="abs" style="left:887.0px;top:400.4px" width="6" height="8.500" viewBox="0 0 7 10"><path d="M3.500 .3L6.600 4.200H.4zM3.500 9.700L.4 5.800h6.200z" fill="#1f2633"/></svg><div class="abs" style="left:1167.0px;top:382.1px;font-size:11px;line-height:16.5px;color:#26303d;font-weight:500;white-space:nowrap;">考核指标</div><div class="abs" style="left:909.4px;top:411.8px;font-size:11px;line-height:16.5px;color:#26303d;font-weight:500;white-space:nowrap;">指标名称</div><div class="abs" style="left:1037.8px;top:411.8px;font-size:11px;line-height:16.5px;color:#26303d;font-weight:500;white-space:nowrap;">权重（%）</div><div class="abs" style="left:1110.0px;top:411.8px;font-size:11px;line-height:16.5px;color:#26303d;font-weight:500;white-space:nowrap;">计量单位</div><div class="abs" style="left:1175.0px;top:411.8px;font-size:11px;line-height:16.5px;color:#26303d;font-weight:500;white-space:nowrap;">计分规则</div><div class="abs" style="left:582.5px;top:441.1px;font-size:11px;line-height:16.5px;color:#323a48;font-weight:400;white-space:nowrap;">第三季度产品中心KPI<br>考核</div><div class="abs" style="left:711.0px;top:441.1px;font-size:11px;line-height:16.5px;color:#3d87e6;font-weight:400;white-space:nowrap;">Lily</div><div class="abs" style="left:774.7px;top:441.1px;font-size:11px;line-height:16.5px;color:#3d87e6;font-weight:400;white-space:nowrap;">产品</div><div class="abs" style="left:832.0px;top:441.1px;font-size:11px;line-height:16.5px;color:#323a48;font-weight:400;white-space:nowrap;">生产总监</div><div class="abs" style="left:909.4px;top:441.1px;font-size:11px;line-height:16.5px;color:#323a48;font-weight:400;white-space:nowrap;">平均订单金额</div><div class="abs" style="right:208.0px;top:441.1px;font-size:11px;line-height:16.5px;color:#323a48;font-weight:400;white-space:nowrap;">20%</div><div class="abs" style="left:1110.0px;top:441.1px;font-size:11px;line-height:16.5px;color:#323a48;font-weight:400;white-space:nowrap;">万元/单</div><div class="abs" style="left:1174.5px;top:441.1px;font-size:11px;line-height:16.5px;color:#323a48;font-weight:400;white-space:nowrap;">实际订单<br>总金额</div><div class="abs" style="left:909.4px;top:487.4px;font-size:11px;line-height:16.5px;color:#323a48;font-weight:400;white-space:nowrap;">新客户开发达成率</div><div class="abs" style="right:208.0px;top:487.4px;font-size:11px;line-height:16.5px;color:#323a48;font-weight:400;white-space:nowrap;">30%</div><div class="abs" style="left:1110.0px;top:487.4px;font-size:11px;line-height:16.5px;color:#323a48;font-weight:400;white-space:nowrap;">%</div><div class="abs" style="left:1174.5px;top:487.4px;font-size:11px;line-height:16.5px;color:#323a48;font-weight:400;white-space:nowrap;">新客户<br>新增数<br>*100</div><div class="abs" style="left:909.4px;top:552.1px;font-size:11px;line-height:16.5px;color:#323a48;font-weight:400;white-space:nowrap;">应收回款完成率</div><div class="abs" style="right:208.0px;top:552.1px;font-size:11px;line-height:16.5px;color:#323a48;font-weight:400;white-space:nowrap;">50%</div><div class="abs" style="left:1110.0px;top:552.1px;font-size:11px;line-height:16.5px;color:#323a48;font-weight:400;white-space:nowrap;">%</div><div class="abs" style="left:1174.5px;top:552.1px;font-size:11px;line-height:16.5px;color:#323a48;font-weight:400;white-space:nowrap;">实际回<br>款金额<br>x100</div><div class="abs" style="left:582.5px;top:615.8px;font-size:11px;line-height:16.5px;color:#323a48;font-weight:400;white-space:nowrap;">第三季度产品中心KPI</div><div class="abs" style="left:711.0px;top:615.8px;font-size:11px;line-height:16.5px;color:#3d87e6;font-weight:400;white-space:nowrap;">Lily</div><div class="abs" style="left:774.7px;top:615.8px;font-size:11px;line-height:16.5px;color:#3d87e6;font-weight:400;white-space:nowrap;">产品</div><div class="abs" style="left:832.0px;top:615.8px;font-size:11px;line-height:16.5px;color:#323a48;font-weight:400;white-space:nowrap;">生产助理</div><div class="abs" style="left:909.4px;top:615.8px;font-size:11px;line-height:16.5px;color:#323a48;font-weight:400;white-space:nowrap;">主要物料耗用率</div><div class="abs" style="right:208.0px;top:615.8px;font-size:11px;line-height:16.5px;color:#323a48;font-weight:400;white-space:nowrap;">30%</div><div class="abs" style="left:1110.0px;top:615.8px;font-size:11px;line-height:16.5px;color:#323a48;font-weight:400;white-space:nowrap;">%</div><div class="abs" style="left:1174.5px;top:615.8px;font-size:11px;line-height:16.5px;color:#323a48;font-weight:400;white-space:nowrap;">主要物</div></div></div>
<div class="abs" style="left:574.0px;top:631.2px;width:612.0px;height:1.0px;background:#c8ebf3"></div><div class="abs" style="left:582.3px;top:639.0px;width:25.5px;height:25.5px;border:1px solid #cdeaf3;border-radius:3px;background:#fff"></div><svg class="abs" style="left:590px;top:646.500px" width="10" height="11" viewBox="0 0 10 11"><rect x=".6" y=".6" width="8.800" height="9.800" rx="1.500" stroke="#3a4152" stroke-width="1" fill="none"/><path d="M5 2.500v6" stroke="#3a4152" stroke-width="1.100"/><path d="M4.200 3.600h1.600M4.200 7.400h1.600" stroke="#2a3140" stroke-width=".9"/></svg><div class="abs" style="left:612.2px;top:639.0px;width:85.4px;height:25.5px;border:1px solid #cdeaf3;border-radius:3px;background:#fff"></div><div class="abs" style="left:620.0px;top:643.9px;font-size:11px;line-height:16.5px;color:#3a4152;font-weight:400;white-space:nowrap;font-size:10.400px;">20 条/页</div><svg class="abs" style="left:680px;top:649px" width="9" height="6" viewBox="0 0 9 6"><path d="M.7 .8L4.500 4.800 8.300 .8" stroke="#3a4152" stroke-width="1" fill="none"/></svg><div class="abs" style="left:708.0px;top:643.9px;font-size:11px;line-height:16.5px;color:#3a4152;font-weight:400;white-space:nowrap;font-size:10.400px;">共12条</div><div class="abs" style="left:1064.3px;top:638.3px;width:28.0px;height:26.9px;border:1px solid #cdeaf3;border-radius:3px;background:#fff"></div><div class="abs" style="left:1075.5px;top:643.9px;font-size:11px;line-height:16.5px;color:#3a4152;font-weight:400;white-space:nowrap;font-size:10.400px;">1</div><div class="abs" style="left:1096.0px;top:643.9px;font-size:11px;line-height:16.5px;color:#3a4152;font-weight:400;white-space:nowrap;font-size:10.400px;">/ 1</div><div class="abs" style="left:1118.3px;top:638.3px;width:27.4px;height:26.9px;border:1px solid #cdeaf3;border-radius:3px;background:#fff"></div><svg class="abs" style="left:1129.300px;top:647.300px" width="6" height="9" viewBox="0 0 6 9"><path d="M5 .7L1.200 4.500 5 8.300" stroke="#3a4152" stroke-width="1" fill="none"/></svg><div class="abs" style="left:1149.4px;top:638.3px;width:27.4px;height:26.9px;border:1px solid #cdeaf3;border-radius:3px;background:#fff"></div><svg class="abs" style="left:1160.300px;top:647.300px" width="6" height="9" viewBox="0 0 6 9"><path d="M1 .7L4.800 4.500 1 8.300" stroke="#3a4152" stroke-width="1" fill="none"/></svg></div></div>
<div class="card" style="left:564px;top:688.500px;width:631px;height:260px"><div class="ctitle">绩效结果明细</div>
<div class="abs" style="left:-564px;top:-688.500px;width:1200px;height:1000px">
<div class="abs" style="left:573px;top:723.500px;width:613.200px;height:240px;border:1px solid #c8ebf3;background:#fff"></div>
<div class="abs" style="left:574px;top:723.500px;width:604px;height:240px;overflow:hidden"><div class="abs" style="left:-574px;top:-723.500px;width:1300px;height:1000px">
<div class="abs" style="left:573.0px;top:723.5px;width:727.0px;height:28.5px;background:#80d6e8"></div><div class="abs" style="left:573.0px;top:752.0px;width:727.0px;height:32.6px;background:#fafdfe"></div><div class="abs" style="left:573.0px;top:784.6px;width:727.0px;height:32.7px;background:#daf2f8"></div><div class="abs" style="left:573.0px;top:817.3px;width:727.0px;height:32.4px;background:#fafdfe"></div><div class="abs" style="left:573.0px;top:849.7px;width:727.0px;height:32.5px;background:#daf2f8"></div><div class="abs" style="left:724.0px;top:723.5px;width:1.0px;height:28.5px;background:#a9e4ef"></div><div class="abs" style="left:724.0px;top:752.0px;width:1.0px;height:148.0px;background:#c8ebf3"></div><div class="abs" style="left:805.5px;top:723.5px;width:1.0px;height:28.5px;background:#a9e4ef"></div><div class="abs" style="left:805.5px;top:752.0px;width:1.0px;height:148.0px;background:#c8ebf3"></div><div class="abs" style="left:885.0px;top:723.5px;width:1.0px;height:28.5px;background:#a9e4ef"></div><div class="abs" style="left:885.0px;top:752.0px;width:1.0px;height:148.0px;background:#c8ebf3"></div><div class="abs" style="left:966.0px;top:723.5px;width:1.0px;height:28.5px;background:#a9e4ef"></div><div class="abs" style="left:966.0px;top:752.0px;width:1.0px;height:148.0px;background:#c8ebf3"></div><div class="abs" style="left:1051.0px;top:723.5px;width:1.0px;height:28.5px;background:#a9e4ef"></div><div class="abs" style="left:1051.0px;top:752.0px;width:1.0px;height:148.0px;background:#c8ebf3"></div><div class="abs" style="left:1150.0px;top:723.5px;width:1.0px;height:28.5px;background:#a9e4ef"></div><div class="abs" style="left:1150.0px;top:752.0px;width:1.0px;height:148.0px;background:#c8ebf3"></div><div class="abs" style="left:573.0px;top:751.5px;width:727.0px;height:1.0px;background:#c8ebf3"></div><div class="abs" style="left:573.0px;top:784.1px;width:727.0px;height:1.0px;background:#c8ebf3"></div><div class="abs" style="left:573.0px;top:816.8px;width:727.0px;height:1.0px;background:#c8ebf3"></div><div class="abs" style="left:573.0px;top:849.2px;width:727.0px;height:1.0px;background:#c8ebf3"></div><div class="abs" style="left:573.0px;top:881.7px;width:727.0px;height:1.0px;background:#c8ebf3"></div><div class="abs" style="left:582.5px;top:729.1px;font-size:11px;line-height:16.5px;color:#26303d;font-weight:500;white-space:nowrap;">绩效考核主题</div><svg class="abs" style="left:711.5px;top:733.0px" width="6" height="8.500" viewBox="0 0 7 10"><path d="M3.500 .3L6.600 4.200H.4zM3.500 9.700L.4 5.800h6.200z" fill="#1f2633"/></svg><div class="abs" style="left:732.8px;top:729.1px;font-size:11px;line-height:16.5px;color:#26303d;font-weight:500;white-space:nowrap;">考核对象</div><svg class="abs" style="left:792.8px;top:733.0px" width="6" height="8.500" viewBox="0 0 7 10"><path d="M3.500 .3L6.600 4.200H.4zM3.500 9.700L.4 5.800h6.200z" fill="#1f2633"/></svg><div class="abs" style="left:814.5px;top:729.1px;font-size:11px;line-height:16.5px;color:#26303d;font-weight:500;white-space:nowrap;">部门</div><svg class="abs" style="left:872.0px;top:733.0px" width="6" height="8.500" viewBox="0 0 7 10"><path d="M3.500 .3L6.600 4.200H.4zM3.500 9.700L.4 5.800h6.200z" fill="#1f2633"/></svg><div class="abs" style="left:894.8px;top:729.1px;font-size:11px;line-height:16.5px;color:#26303d;font-weight:500;white-space:nowrap;">岗位</div><svg class="abs" style="left:953.6px;top:733.0px" width="6" height="8.500" viewBox="0 0 7 10"><path d="M3.500 .3L6.600 4.200H.4zM3.500 9.700L.4 5.800h6.200z" fill="#1f2633"/></svg><div class="abs" style="left:976.0px;top:729.1px;font-size:11px;line-height:16.5px;color:#26303d;font-weight:500;white-space:nowrap;">自评分合计</div><svg class="abs" style="left:1039.4px;top:733.0px" width="6" height="8.500" viewBox="0 0 7 10"><path d="M3.500 .3L6.600 4.200H.4zM3.500 9.700L.4 5.800h6.200z" fill="#1f2633"/></svg><div class="abs" style="left:1060.6px;top:729.1px;font-size:11px;line-height:16.5px;color:#26303d;font-weight:500;white-space:nowrap;">直接上级评分</div><svg class="abs" style="left:1138.0px;top:733.0px" width="6" height="8.500" viewBox="0 0 7 10"><path d="M3.500 .3L6.600 4.200H.4zM3.500 9.700L.4 5.800h6.200z" fill="#1f2633"/></svg><div class="abs" style="left:1159.3px;top:729.1px;font-size:11px;line-height:16.5px;color:#26303d;font-weight:500;white-space:nowrap;">总分</div><div class="abs" style="left:582.5px;top:758.8px;font-size:11px;line-height:16.5px;color:#323a48;font-weight:400;white-space:nowrap;">第三季度产品中心KPI考核</div><div class="abs" style="left:732.8px;top:758.8px;font-size:11px;line-height:16.5px;color:#3d87e6;font-weight:400;white-space:nowrap;">Lily</div><div class="abs" style="left:814.5px;top:758.8px;font-size:11px;line-height:16.5px;color:#3d87e6;font-weight:400;white-space:nowrap;">产品</div><div class="abs" style="left:894.8px;top:758.8px;font-size:11px;line-height:16.5px;color:#323a48;font-weight:400;white-space:nowrap;">生产总监</div><div class="abs" style="right:257.2px;top:758.8px;font-size:11px;line-height:16.5px;color:#323a48;font-weight:400;white-space:nowrap;">83.6</div><div class="abs" style="left:1060.6px;top:758.8px;font-size:11px;line-height:16.5px;color:#323a48;font-weight:400;white-space:nowrap;">84.4</div><div class="abs" style="left:582.5px;top:791.2px;font-size:11px;line-height:16.5px;color:#323a48;font-weight:400;white-space:nowrap;">第三季度产品中心KPI考核</div><div class="abs" style="left:732.8px;top:791.2px;font-size:11px;line-height:16.5px;color:#3d87e6;font-weight:400;white-space:nowrap;">Lily</div><div class="abs" style="left:814.5px;top:791.2px;font-size:11px;line-height:16.5px;color:#3d87e6;font-weight:400;white-space:nowrap;">产品</div><div class="abs" style="left:894.8px;top:791.2px;font-size:11px;line-height:16.5px;color:#323a48;font-weight:400;white-space:nowrap;">生产助理</div><div class="abs" style="right:257.2px;top:791.2px;font-size:11px;line-height:16.5px;color:#323a48;font-weight:400;white-space:nowrap;">82.9</div><div class="abs" style="left:1060.6px;top:791.2px;font-size:11px;line-height:16.5px;color:#323a48;font-weight:400;white-space:nowrap;">83.1</div><div class="abs" style="left:582.5px;top:823.9px;font-size:11px;line-height:16.5px;color:#323a48;font-weight:400;white-space:nowrap;">第三季度产品中心KPI考核</div><div class="abs" style="left:732.8px;top:823.9px;font-size:11px;line-height:16.5px;color:#3d87e6;font-weight:400;white-space:nowrap;">Lily</div><div class="abs" style="left:814.5px;top:823.9px;font-size:11px;line-height:16.5px;color:#3d87e6;font-weight:400;white-space:nowrap;">产品</div><div class="abs" style="left:894.8px;top:823.9px;font-size:11px;line-height:16.5px;color:#323a48;font-weight:400;white-space:nowrap;">生产助理</div><div class="abs" style="right:257.2px;top:823.9px;font-size:11px;line-height:16.5px;color:#323a48;font-weight:400;white-space:nowrap;">80.6</div><div class="abs" style="left:1060.6px;top:823.9px;font-size:11px;line-height:16.5px;color:#323a48;font-weight:400;white-space:nowrap;">81.8</div><div class="abs" style="left:582.5px;top:856.5px;font-size:11px;line-height:16.5px;color:#323a48;font-weight:400;white-space:nowrap;">第三季度销售部门绩效考核</div><div class="abs" style="left:732.8px;top:856.5px;font-size:11px;line-height:16.5px;color:#3d87e6;font-weight:400;white-space:nowrap;">Lily</div><div class="abs" style="left:814.5px;top:856.5px;font-size:11px;line-height:16.5px;color:#3d87e6;font-weight:400;white-space:nowrap;">产品</div><div class="abs" style="left:894.8px;top:856.5px;font-size:11px;line-height:16.5px;color:#323a48;font-weight:400;white-space:nowrap;">客户经理</div><div class="abs" style="right:257.2px;top:856.5px;font-size:11px;line-height:16.5px;color:#323a48;font-weight:400;white-space:nowrap;">90.2</div><div class="abs" style="left:1060.6px;top:856.5px;font-size:11px;line-height:16.5px;color:#323a48;font-weight:400;white-space:nowrap;">90.5</div></div></div>
</div></div>
<!--/TB--></div>
</body>
</html>
